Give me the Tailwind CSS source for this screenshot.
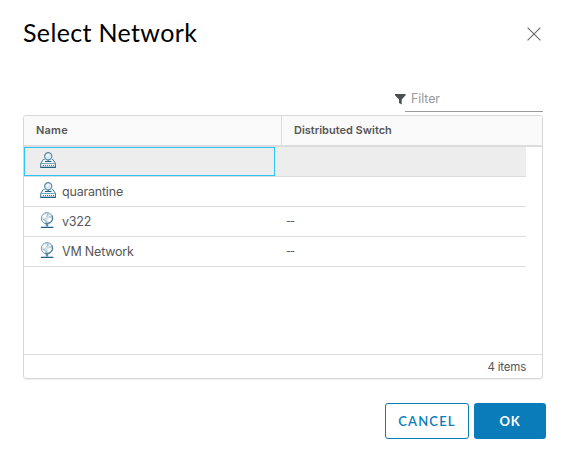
<!DOCTYPE html>
<html lang="en">
<head>
<meta charset="utf-8">
<title>Select Network</title>
<script src="https://cdn.jsdelivr.net/npm/@tailwindcss/browser@4"></script>
</head>
<body class="bg-white">
<svg class="hidden">
  <symbol id="portgroup" viewBox="0 0 16 16">
    <path d="M4.5 7.5H3.3L.7 11.5v3.8h14.8v-3.8l-2.6-4H12" fill="#f4f8fa" stroke="#3f7896" stroke-width="1" stroke-linejoin="round"/>
    <path d="M1 11.5h14" stroke="#7ba6bb" stroke-width="1"/>
    <path d="M3 13.5h11" stroke="#3f7896" stroke-width="1" stroke-dasharray="1 1"/>
    <path d="M.4 15.4h15.4" stroke="#22618a" stroke-width="1.2"/>
    <path d="M8.2 8v1.5M5 9.5h6.5" stroke="#22618a" stroke-width="1"/>
    <circle cx="8.2" cy="4.3" r="3.6" fill="#dceaf1" stroke="#5b8ba5" stroke-width="1.2"/>
    <path d="M6.4 4.6c.2-1.3 1-2 2.2-1.9" fill="none" stroke="#fff" stroke-width="1.4"/>
  </symbol>
  <symbol id="network" viewBox="0 0 16 16">
    <circle cx="8" cy="6.3" r="5.7" fill="#d3e2ea" stroke="#7fa3b6" stroke-width="1"/>
    <path d="M3.2 4.5l2-2 2.6.2-.8 2-2 1.6zM8.5 7l3-1.2 1.2 1.8-1.6 2.6-2.2-.8zM9.5 2.5l1.8.4.7 1.6-1.8.2zM3.8 8l2 .8.6 1.7-1.8-.7z" fill="#fff"/>
    <path d="M7.6 1.2l1.6 1.4-1.2 2M4 7.2l3 1.4.2 1.8M10.4 4.8l2 .4" fill="none" stroke="#8fb0c1" stroke-width=".9"/>
    <path d="M12.8 3.5c1.2 2.2.7 4.9-1 6.3-1.5 1.4-3.6 1.9-5.6 1.3" fill="none" stroke="#4f7f99" stroke-width="1.1"/>
    <path d="M8 12v2.5" stroke="#5d8ca3" stroke-width="2.4"/>
    <path d="M1.8 15.4h12.6" stroke="#22618a" stroke-width="1.3"/>
  </symbol>
</svg>
<main class="w-[563px] h-[453px] overflow-hidden pl-[23px] text-[#565656] font-['Inter','Liberation_Sans',sans-serif]">
  <header class="flex justify-between items-start h-[91px] pt-[17px] pr-[22px]">
    <h1 class="font-['Lato',sans-serif] text-[25px] leading-[30px] tracking-[0.35px] text-black whitespace-nowrap">Select Network</h1>
    <svg class="w-[14px] h-[14px] mt-[10px]" viewBox="0 0 14 14"><path d="M.6.6l12.8 12.8M13.4.6L.6 13.4" stroke="#6e6e6e" stroke-width="1.2"/></svg>
  </header>
  <div class="flex w-[520px] h-[24px] justify-end">
    <svg class="w-[11px] h-[11px] mt-[3px] -mr-px" viewBox="0 0 11 11"><path d="M0 0h10.6v1.3L6.7 5.4v5.2L4 8.9V5.4L0 1.3z" fill="#4a5054"/></svg>
    <div class="w-[138px] h-[21px] border-b border-[#9a9a9a] pl-[6px] text-[12.5px] leading-[16px] tracking-[-0.1px] text-[#9a9a9a]">Filter</div>
  </div>
  <section class="w-[520px] h-[264px] border border-[#d7d7d7] rounded-[3px] shadow-[0_1px_1px_rgba(0,0,0,0.06)] flex flex-col">
    <div class="flex h-[31px] shrink-0 border-b-2 border-[#dcdcdc] bg-[#fafafa] text-[11px] font-semibold leading-[28px] rounded-t-[2px]">
      <div class="w-[258px] border-r border-[#dcdcdc] pl-[12px] tracking-[0.2px]">Name</div>
      <div class="pl-[12px]">Distributed Switch</div>
    </div>
    <div class="w-[502px] text-[12.5px] tracking-[-0.2px]">
      <div class="flex h-[30px] border-b border-[#dcdcdc] bg-[#ededed]">
        <div class="w-[251px] border border-[#2fc4f5] pl-[15px] pt-[4px]"><svg class="w-4 h-4"><use href="#portgroup"/></svg></div>
      </div>
      <div class="flex h-[30px] border-b border-[#dcdcdc] pl-[16px] pt-[5px]">
        <svg class="w-4 h-4"><use href="#portgroup"/></svg><span class="ml-[6px] leading-[19px]">quarantine</span>
      </div>
      <div class="flex h-[30px] border-b border-[#dcdcdc] pl-[15px] pt-[5px]">
        <svg class="w-4 h-4"><use href="#network"/></svg><span class="ml-[7px] w-[224px] leading-[19px]">v322</span><span class="leading-[19px] text-[11px] tracking-[-1px]">--</span>
      </div>
      <div class="flex h-[30px] border-b border-[#dcdcdc] pl-[15px] pt-[5px]">
        <svg class="w-4 h-4"><use href="#network"/></svg><span class="ml-[7px] w-[224px] leading-[19px]">VM Network</span><span class="leading-[19px] text-[11px] tracking-[-1px]">--</span>
      </div>
    </div>
    <div class="mt-auto h-[24px] border-t border-[#dcdcdc] pr-[16px] text-right text-[11.5px] tracking-[-0.2px] leading-[24px]">4 items</div>
  </section>
  <footer class="flex justify-end gap-[5px] pr-[17px] mt-[24px] font-['Lato',sans-serif] text-[13px] leading-[34px] text-center">
    <button class="w-[84px] h-[36px] border border-[#0a7cba] rounded-[3px] text-[#0a7cba] font-semibold tracking-[1.2px]">CANCEL</button>
    <button class="w-[72px] h-[36px] rounded-[3px] bg-[#0a7cba] text-white font-bold tracking-[0.8px]">OK</button>
  </footer>
</main>
</body>
</html>
